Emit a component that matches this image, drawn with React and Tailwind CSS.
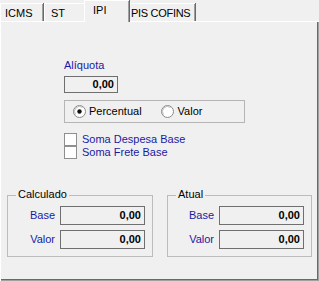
import React from "react";

const font = { fontFamily: '"Liberation Sans", Arial, sans-serif' };

function Tab({ label, active, w, pl }) {
  if (active) {
    return (
      <div className={`relative z-10 -mx-[2px] -mb-px flex h-[22px] items-start whitespace-nowrap border-l border-t border-white bg-[#f0f0f0] pt-[3px] shadow-[inset_-1px_0_0_#a0a0a0,1px_0_0_#696969] ${w} ${pl}`}>
        {label}
      </div>
    );
  }
  return (
    <div className={`flex h-[18px] items-start whitespace-nowrap border-l border-t border-white bg-[#f0f0f0] pt-[3px] shadow-[inset_-1px_0_0_#a0a0a0,1px_0_0_#696969] ${w} ${pl}`}>
      {label}
    </div>
  );
}

function Field({ w, h }) {
  return (
    <div className={`flex items-center justify-end border border-[#6f6f6f] bg-[#f0f0f0] pr-[3px] font-bold text-black ${w} ${h}`}>
      0,00
    </div>
  );
}

function Radio({ checked }) {
  return (
    <svg width="13" height="13" viewBox="0 0 13 13">
      <circle cx="6.5" cy="6.5" r="6" fill="#fff" stroke="#8a8a8a" />
      <path d="M2.5 9.5 A5 5 0 0 1 9.5 2.5" fill="none" stroke="#bdbdbd" />
      {checked && <circle cx="6.5" cy="6.5" r="2.2" fill="#111" />}
    </svg>
  );
}

function Check({ label }) {
  return (
    <div className="flex h-[13px] items-center gap-[5px]">
      <div className="h-[13px] w-[13px] border border-[#8e8f8f] bg-white" />
      <span className="text-[#1a1aa6]">{label}</span>
    </div>
  );
}

function Group({ title, w, children }) {
  return (
    <div className={`relative h-[62px] border border-[#bcbcbc] ${w}`}>
      <span className="absolute -top-[8px] left-[8px] bg-[#f0f0f0] px-[2px] leading-[13px] text-black">{title}</span>
      <div className="flex flex-col gap-[5px] pt-[10px]">{children}</div>
    </div>
  );
}

function Row({ label, lw }) {
  return (
    <div className="flex items-center">
      <span className={`pr-[5px] text-right text-[#1a1aa6] ${lw}`}>{label}</span>
      <Field w="w-[85px]" h="h-[19px]" />
    </div>
  );
}

export default function App() {
  return (
    <div className="h-[281px] w-[319px] bg-[#f0f0f0] text-[11px] leading-[13px] text-black" style={font}>
      <div className="flex h-[21px] items-end">
        <Tab label="ICMS" w="w-[43px]" pl="pl-[4px]" />
        <div className="w-px" />
        <Tab label="ST" w="w-[41px]" pl="pl-[6px]" />
        <div className="w-px" />
        <Tab label="IPI" active w="w-[45px]" pl="pl-[8px]" />
        <div className="w-px" />
        <Tab label="PIS COFINS" w="w-[67px]" pl="pl-[2px] tracking-[-0.3px]" />
      </div>
      <div className="h-[260px] border-l border-t border-white shadow-[inset_-1px_-1px_0_#a0a0a0,inset_-2px_-2px_0_#696969]">
        <div className="pl-[63px] pt-[37px]">
          <div className="text-[#1a1aa6]">Alíquota</div>
          <div className="mt-[4px]">
            <Field w="w-[54px]" h="h-[17px]" />
          </div>
          <div className="mt-[7px] flex h-[23px] w-[181px] items-center border border-[#b5b5b5] pl-[8px]">
            <div className="flex items-center gap-[3px]">
              <Radio checked />
              <span>Percentual</span>
            </div>
            <div className="ml-[19px] flex items-center gap-[4px]">
              <Radio />
              <span>Valor</span>
            </div>
          </div>
          <div className="mt-[10px] flex flex-col">
            <Check label="Soma Despesa Base" />
            <Check label="Soma Frete Base" />
          </div>
        </div>
        <div className="mt-[36px] flex pl-[6px]">
          <Group title="Calculado" w="w-[146px]">
            <Row label="Base" lw="w-[52px]" />
            <Row label="Valor" lw="w-[52px]" />
          </Group>
          <div className="w-[14px]" />
          <Group title="Atual" w="w-[145px]">
            <Row label="Base" lw="w-[51px]" />
            <Row label="Valor" lw="w-[51px]" />
          </Group>
        </div>
      </div>
    </div>
  );
}
